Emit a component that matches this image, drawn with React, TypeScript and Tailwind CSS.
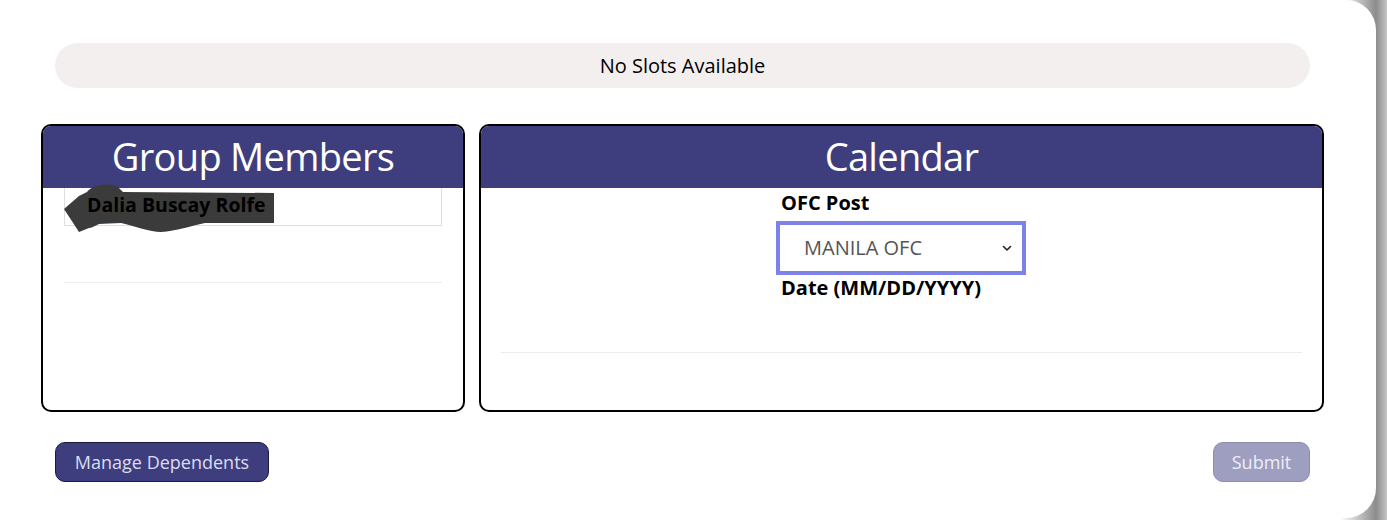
import React from "react";

const font = { fontFamily: '"Open Sans", "Noto Sans", sans-serif' };

function Chevron() {
  return (
    <svg width="14" height="14" viewBox="0 0 14 14" fill="none">
      <path d="M3.5 5.5 L7 9 L10.5 5.5" stroke="#222" strokeWidth="1.6" strokeLinecap="round" strokeLinejoin="round" />
    </svg>
  );
}

export default function App() {
  return (
    <div
      className="w-[1387px] h-[520px] overflow-hidden bg-[linear-gradient(to_right,#ffffff_1340px,#8c8c8c_1376px,#c4c4c4_1387px)] text-black"
      style={font}
    >
      <div className="w-[1376px] h-[518px] bg-white rounded-tr-[30px] rounded-br-[30px] rounded-tl-[6px] pl-[55px] pr-[66px] pt-[43px] flex flex-col">
        <div className="h-[45px] rounded-full bg-[#f3efef] flex items-center justify-center text-[20px] pt-[1px]">
          No Slots Available
        </div>

        <div className="mt-[36px] -mx-[14px] flex gap-[14px]">
          <div className="w-[424px] h-[288px] border-2 border-black rounded-[10px] overflow-hidden flex flex-col">
            <div className="h-[62px] bg-[#3e3e7e] text-white text-[38px] flex items-center justify-center tracking-[-0.7px] leading-none pb-[2px]">
              Group Members
            </div>
            <div className="px-[21px]">
              <div className="relative h-[38px] border border-[#dedede] border-t-0">
                <svg className="absolute left-0 top-0 overflow-visible" width="1" height="1">
                  <path
                    d="M-1 21 L14 8 L22 4 C26 -2 40 -6 52 -2 L58 4 L209 5 L209 35 L140 35 C125 38 112 43 96 44 C85 44 70 38 56 35 C48 35 40 36 34 36 C30 38 26 40 24 40 L14 44 Z"
                    fill="#3b3b3b"
                  />
                </svg>
                <div className="relative pl-[22px] pt-[4px] text-[19.5px] font-bold leading-[26px]">
                  Dalia Buscay Rolfe
                </div>
              </div>
              <div className="mt-[56px] h-px bg-[#ececec]" />
            </div>
          </div>

          <div className="flex-1 h-[288px] border-2 border-black rounded-[10px] overflow-hidden flex flex-col">
            <div className="h-[62px] bg-[#3e3e7e] text-white text-[38px] flex items-center justify-center tracking-[-0.7px] leading-none pb-[2px]">
              Calendar
            </div>
            <div className="px-[20px]">
              <div className="pl-[280px] pt-[2px]">
                <div className="text-[20px] font-bold leading-[26px]">OFC Post</div>
                <div className="-ml-[5px] mt-[5px] w-[250px] h-[54px] border-[4px] border-[#7d83e6] bg-white flex items-center justify-between pl-[24px] pr-[8px]">
                  <span className="text-[20px] text-[#555]">MANILA OFC</span>
                  <Chevron />
                </div>
                <div className="text-[20px] font-bold leading-[26px]">Date (MM/DD/YYYY)</div>
              </div>
              <div className="mt-[51px] h-px bg-[#ececec]" />
            </div>
          </div>
        </div>

        <div className="mt-[30px] flex justify-between">
          <button className="h-[40px] w-[214px] rounded-[10px] bg-[#3e3e7e] border border-[#1a1a40] text-[#dcdcf2] text-[18px] flex items-center justify-center">
            Manage Dependents
          </button>
          <button className="h-[40px] w-[97px] rounded-[10px] bg-[#9e9ec0] border border-[#8c8cae] text-[#eeeef8] text-[18px] flex items-center justify-center">
            Submit
          </button>
        </div>
      </div>
    </div>
  );
}
